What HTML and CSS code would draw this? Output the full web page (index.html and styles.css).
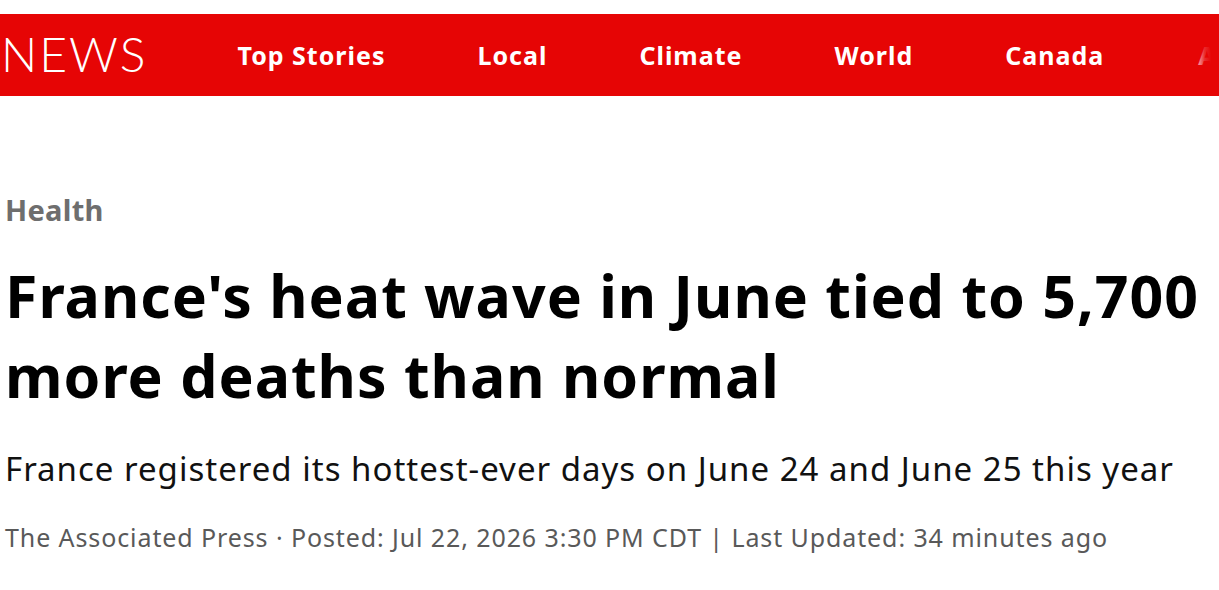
FILE: index.html
```html
<!DOCTYPE html>
<html lang="en">
<head>
<meta charset="utf-8">
<title>France's heat wave in June tied to 5,700 more deaths than normal</title>
<link rel="stylesheet" href="styles.css">
</head>
<body>
<header class="masthead">
  <a class="brand" href="#">NEWS</a>
  <nav class="sections">
    <a href="#">Top Stories</a>
    <a href="#">Local</a>
    <a href="#">Climate</a>
    <a href="#">World</a>
    <a href="#">Canada</a>
    <a href="#">Arts</a>
  </nav>
</header>
<main class="story">
  <a class="category" href="#">Health</a>
  <h1 class="headline">France's heat wave in June tied to 5,700 more deaths than normal</h1>
  <p class="deck">France registered its hottest-ever days on June 24 and June 25 this year</p>
  <p class="byline">The Associated Press · Posted: Jul 22, 2026 3:30 PM CDT | Last Updated: 34 minutes ago</p>
</main>
</body>
</html>
```

FILE: styles.css
```css
* { box-sizing: border-box; }

html, body {
  margin: 0;
  padding: 0;
  background: #ffffff;
  overflow: hidden;
}

body {
  font-family: "Noto Sans", "Open Sans", sans-serif;
  padding-top: 14px;
}

/* red section bar; the nav row runs past the right edge and fades out */
.masthead {
  position: relative;
  display: flex;
  align-items: center;
  height: 82px;
  background: #e60505;
  padding-left: 1px;
  white-space: nowrap;
  overflow: hidden;
}

.masthead::after {
  content: "";
  position: absolute;
  top: 0;
  right: 0;
  width: 26px;
  height: 100%;
  background: linear-gradient(to right, rgba(230, 5, 5, 0), rgba(230, 5, 5, 0.85) 45%, #e60505 70%);
}

.brand {
  font-family: "Lato", "Noto Sans", sans-serif;
  font-weight: 300;
  font-size: 48px;
  letter-spacing: 2px;
  color: #ffffff;
  text-decoration: none;
  margin-top: -3px;
}

.sections {
  display: flex;
  gap: 92px;
  margin-left: 90px;
}

.sections a {
  color: #ffffff;
  font-weight: 700;
  font-size: 25px;
  letter-spacing: 1px;
  text-decoration: none;
}

.sections a:last-child {
  margin-left: 2px;
}

.story {
  padding: 0 5px;
  margin-top: 94px;
}

.category {
  display: block;
  color: #6e6e6e;
  font-weight: 700;
  font-size: 29px;
  line-height: 40px;
  letter-spacing: 0.3px;
  text-decoration: none;
  margin-top: 1px;
}

.headline {
  margin: 25px 0 0;
  font-size: 59px;
  line-height: 80px;
  font-weight: 700;
  letter-spacing: 1px;
  color: #000000;
}

.deck {
  margin: 32px 0 0;
  font-size: 33px;
  line-height: 44px;
  letter-spacing: 1px;
  color: #111111;
}

.byline {
  margin: 29px 0 0;
  font-size: 25px;
  line-height: 34px;
  letter-spacing: 0.9px;
  color: #595959;
}
```
